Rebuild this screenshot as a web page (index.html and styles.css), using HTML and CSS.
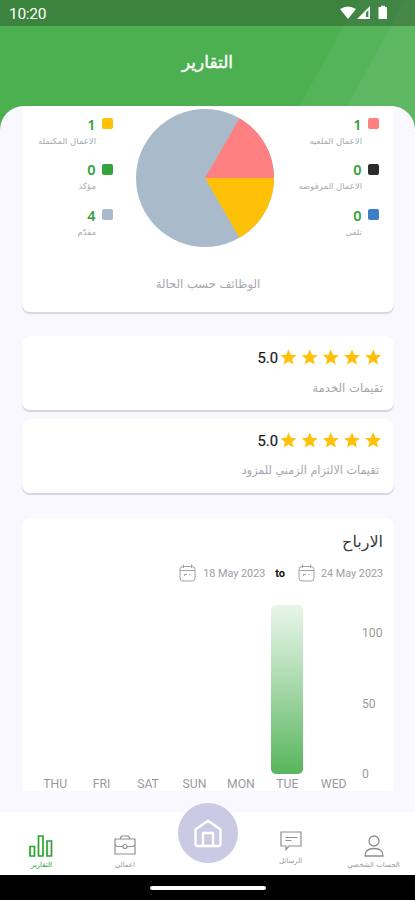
FILE: index.html
```html
<!DOCTYPE html>
<html lang="ar">
<head>
<meta charset="utf-8">
<title>التقارير</title>
<link rel="stylesheet" href="styles.css">
</head>
<body>
<div class="top">
  <svg class="rays" viewBox="0 0 415 132" aria-hidden="true"><path d="M358 0H415V132H285Z"/><path d="M405 0H415V132H333Z"/></svg>
  <div class="status"><span class="clock">10:20</span>
    <svg width="48" height="16" viewBox="0 0 48 16" fill="#fff"><path d="M0 4Q8-1 16 4L8 14Z"/><path fill-rule="evenodd" d="M17 14L30 1V14ZM26 12V7.500L28.400 5V12Z"/><path d="M39 2H41V.7H45V2H47V14H38.500V2Z"/></svg>
  </div>
  <h1>التقارير</h1>
</div>
<main>
  <section class="card summary">
    <div class="legends">
      <div class="legend left">
        <div class="item"><div class="num">1<i class="yellow"></i></div><p dir="rtl">الاعمال المكتمله</p></div>
        <div class="item"><div class="num">0<i class="green"></i></div><p dir="rtl">مؤكد</p></div>
        <div class="item"><div class="num">4<i class="grey"></i></div><p dir="rtl">مقدّم</p></div>
      </div>
      <svg class="pie" width="138" height="138" viewBox="-69 -69 138 138"><circle r="69" fill="#a9bbcb"/><path d="M0 0L34.500-59.800A69 69 0 0 1 69 0Z" fill="#ff8080"/><path d="M0 0H69A69 69 0 0 1 34.500 59.800Z" fill="#ffc107"/></svg>
      <div class="legend right">
        <div class="item"><div class="num">1<i class="red"></i></div><p dir="rtl">الاعمال الملغيه</p></div>
        <div class="item"><div class="num">0<i class="black"></i></div><p dir="rtl">الاعمال المرفوضه</p></div>
        <div class="item"><div class="num">0<i class="blue"></i></div><p dir="rtl">تلقى</p></div>
      </div>
    </div>
    <p class="caption" dir="rtl">الوظائف حسب الحالة</p>
  </section>
  <svg class="defs" width="0" height="0"><defs><path id="star" d="M8.500 0.300L10.700 5.700L16.500 6.200L12.100 10L13.500 15.600L8.500 12.600L3.500 15.600L4.900 10L.5 6.200L6.300 5.700Z"/>
    <g id="calendar" fill="none" stroke="#a2a2a9" stroke-width="1"><rect x="1" y="2.500" width="15" height="14.500" rx="3"/><path d="M1 6.500H16M4.500.5V4M12.500.5V4M5.500 10.500V12M5.500 10.500H8M10 10.500H11"/></g></defs></svg>
  <section class="card rating first">
    <div class="score">5.0<svg width="102" height="17" viewBox="0 0 102 17" fill="#ffc107"><use href="#star"/><use href="#star" x="21.200"/><use href="#star" x="42.300"/><use href="#star" x="63.500"/><use href="#star" x="84.700"/></svg></div>
    <p dir="rtl">تقيمات الخدمة</p>
  </section>
  <section class="card rating second">
    <div class="score">5.0<svg width="102" height="17" viewBox="0 0 102 17" fill="#ffc107"><use href="#star"/><use href="#star" x="21.200"/><use href="#star" x="42.300"/><use href="#star" x="63.500"/><use href="#star" x="84.700"/></svg></div>
    <p dir="rtl">تقيمات الالتزام الزمني للمزود</p>
  </section>
  <section class="card earnings">
    <h2 dir="rtl">الارباح</h2>
    <div class="dates"><svg width="17" height="18"><use href="#calendar"/></svg><span class="date">18 May 2023</span><b>to</b><svg width="17" height="18"><use href="#calendar"/></svg><span class="date end">24 May 2023</span></div>
    <div class="chart">
      <div class="plot">
        <div class="col"><span>THU</span></div><div class="col"><span>FRI</span></div><div class="col"><span>SAT</span></div><div class="col"><span>SUN</span></div><div class="col"><span>MON</span></div><div class="col"><div class="bar"></div><span>TUE</span></div><div class="col"><span>WED</span></div>
      </div>
      <div class="scale"><span>100</span><span>50</span><span>0</span></div>
    </div>
  </section>
</main>
<nav>
  <a class="tab reports"><svg width="24" height="22" fill="none" stroke="#27a52f" stroke-width="1.700"><path d="M1 11.500H5.500V21H1ZM9.500 1H14V21H9.500ZM18 6H22.500V21H18Z"/></svg><span>التقارير</span></a>
  <a class="tab work"><svg width="22" height="20" fill="none" stroke="#8e8e96" stroke-width="1.200"><path d="M1 4H21V19H1ZM6.500 4V2.500L8 1H14L15.500 2.500V4M1 8Q1 11.500 4 11.500H9M13 11.500H18Q21 11.500 21 8"/><circle cx="11" cy="11.500" r="2"/></svg><span>اعمالي</span></a>
  <a class="home"><svg width="28" height="29" fill="none" stroke="#fff" stroke-width="2.400" stroke-linejoin="round"><path d="M1.500 10.500L14 1.800L26.500 10.500V25.500L25 27H3L1.500 25.500ZM9 27V14H19V27"/></svg></a>
  <a class="tab messages"><svg width="22" height="20" fill="none" stroke="#8e8e96" stroke-width="1.200"><path d="M1 1H21V15H9L6 18.500V15H1ZM5.500 6.500H17.500M5.500 9.500H11.500"/></svg><span>الرسائل</span></a>
  <a class="tab account"><svg width="20" height="22" fill="none" stroke="#8e8e96" stroke-width="1.300"><circle cx="10" cy="6" r="5"/><path d="M1 21Q1 13.500 10 13.500T19 21Z"/></svg><span>الحساب الشخصي</span></a>
</nav>
<footer><i></i></footer>
</body>
</html>
```
FILE: styles.css
```css
* { box-sizing: border-box; }
body { margin: 0; width: 415px; height: 900px; overflow: hidden; display: flex; flex-direction: column; background: #f9f8ff; font-family: Roboto, "DejaVu Sans", sans-serif; }
h1, h2, p { margin: 0; white-space: nowrap; }
svg { display: block; flex: none; }
.top { height: 132px; margin-bottom: -26px; background: #4caf50; position: relative; flex: none; color: #fff; }
.rays { position: absolute; inset: 0; width: 415px; height: 132px; fill: #fff; fill-opacity: .055; }
.status { height: 26px; padding: 0 27px 0 9px; display: flex; align-items: center; justify-content: space-between; background: rgba(35, 60, 35, .38); position: relative; }
.clock { font-size: 15.500px; letter-spacing: -.3px; padding-top: 2px; }
h1 { position: relative; font-family: "DejaVu Sans", sans-serif; font-size: 17px; line-height: 24px; font-weight: 400; text-align: center; -webkit-text-stroke: .4px #fff; margin-top: 24px; }
main { position: relative; height: 706px; flex: none; padding: 0 21px 0 22px; border-radius: 24px 24px 0 0; background: #f9f8ff; overflow: hidden; }
.card { background: #fff; border-radius: 8px; box-shadow: 0 1.500px 1px rgba(70, 70, 80, .19); }
.summary { height: 206px; border-radius: 0 0 8px 8px; }
.legends { display: flex; padding-top: 3px; height: 169px; }
.legend { display: flex; flex-direction: column; gap: 9.500px; padding-top: 5.500px; }
.left { width: 91px; margin-right: 23px; }
.right { width: 91px; margin-left: 14px; }
.item { height: 36px; font-family: "DejaVu Sans", sans-serif; }
.num { height: 18px; display: flex; align-items: center; justify-content: flex-end; gap: 6.500px; color: #35a03a; font: 600 14.500px/18px "Noto Sans", sans-serif; }
.num i { width: 11px; height: 11px; border-radius: 2px; }
.yellow { background: #ffc107; } .green { background: #35a23c; } .grey { background: #a9bbcb; }
.red { background: #ff8080; } .black { background: #2c2b2e; } .blue { background: #3c80c3; }
.legend p { margin-right: 17px; text-align: right; direction: rtl; font-size: 8.500px; line-height: 16px; color: #a9a9af; }
.caption { font-family: "DejaVu Sans", sans-serif; font-size: 11.600px; line-height: 18px; color: #a5a5ac; text-align: center; }
.defs { position: absolute; }
.rating { height: 74px; padding: 13px 11px 0 0; }
.first { margin-top: 24px; } .second { margin-top: 9px; }
.score { height: 18px; display: flex; align-items: center; justify-content: flex-end; gap: 2px; margin-right: 1px; margin-top: -.5px; color: #18181b; font-size: 14.800px; -webkit-text-stroke: .2px #18181b; }
.score svg { -webkit-text-stroke: 0; }
.rating p { font-family: "DejaVu Sans", sans-serif; font-size: 11.700px; line-height: 18px; margin-top: 12.500px; color: #a5a5ac; }
.rating.second p { margin-right: 4px; margin-top: 12px; font-size: 11.200px; }
.earnings { margin-top: 25px; height: 273px; border-radius: 8px 8px 0 0; box-shadow: none; padding: 12px 11px 0 0; }
h2 { font-family: "DejaVu Sans", sans-serif; font-size: 16px; line-height: 24px; font-weight: 400; color: #38383c; }
.dates { display: flex; align-items: center; justify-content: flex-end; height: 18px; margin-top: 10px; font-size: 10.800px; color: #9d9da4; }
.date { width: 62px; margin-left: 7px; white-space: nowrap; }
.date.end { margin-left: 6px; }
.dates b { color: #111; margin: 0 13px 0 10px; font-size: 11px; }
.chart { display: flex; height: 209px; padding-top: 23px; color: #999aa0; font-size: 12.200px; }
.plot { display: flex; margin-left: 10px; width: 325px; height: 187px; }
.col { flex: 1; display: flex; flex-direction: column; align-items: center; justify-content: flex-end; }
.col span { line-height: 15px; margin-top: 3px; }
.bar { width: 32px; height: 169px; border-radius: 5px; background: linear-gradient(#e8f5e9, #bfe3c1 32%, #58b55d); flex: none; }
.scale { margin-left: 5px; height: 155px; margin-top: 21px; display: flex; flex-direction: column; justify-content: space-between; line-height: 14px; }
nav { height: 63px; flex: none; background: #fff; position: relative; display: flex; direction: ltr; }
.tab { width: 83px; display: flex; flex-direction: column; align-items: center; font-family: "DejaVu Sans", sans-serif; font-size: 7px; color: #96969e; padding-top: 23px; }
.tab span { white-space: nowrap; line-height: 12px; margin-top: 2px; }
.work { width: 84px; }
.work span { margin-top: 4px; }
.reports { color: #27a52f; }
.messages { padding-top: 19px; }
.messages span { margin-top: 4px; }
.home { width: 60px; height: 60px; border-radius: 50%; background: #cbcae4; margin: -9px 11.500px 0 11px; display: flex; align-items: center; justify-content: center; }
footer { height: 25px; flex: none; background: #000; display: flex; align-items: center; justify-content: center; }
footer i { width: 116px; height: 4px; border-radius: 2px; background: #fff; }
```
